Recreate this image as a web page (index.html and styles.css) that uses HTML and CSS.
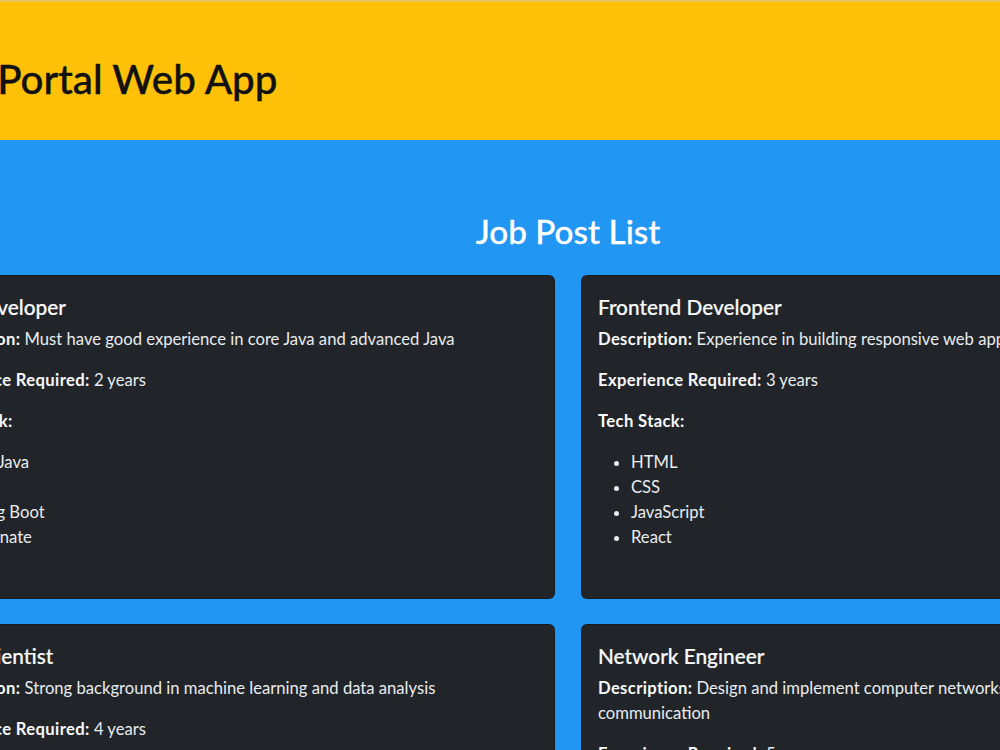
FILE: index.html
```html
<!DOCTYPE html>
<html lang="en">
<head>
<meta charset="utf-8">
<title>Job Portal Web App</title>
<link rel="stylesheet" href="styles.css">
</head>
<body>
<div class="frame">
  <div class="page">
    <header class="app-header">
      <h1 class="app-title">Job Portal Web App</h1>
    </header>
    <main class="jobs">
      <h2 class="jobs-title">Job Post List</h2>
      <div class="job-grid">
        <article class="job-card">
          <h5 class="job-name">Java Developer</h5>
          <p><strong>Description:</strong> Must have good experience in core Java and advanced Java</p>
          <p><strong>Experience Required:</strong> 2 years</p>
          <p><strong>Tech Stack:</strong></p>
          <ul class="stack">
            <li>Core Java</li>
            <li>J2EE</li>
            <li>Spring Boot</li>
            <li>Hibernate</li>
          </ul>
        </article>
        <article class="job-card">
          <h5 class="job-name">Frontend Developer</h5>
          <p><strong>Description:</strong> Experience in building responsive web applications using React</p>
          <p><strong>Experience Required:</strong> 3 years</p>
          <p><strong>Tech Stack:</strong></p>
          <ul class="stack">
            <li>HTML</li>
            <li>CSS</li>
            <li>JavaScript</li>
            <li>React</li>
          </ul>
        </article>
        <article class="job-card">
          <h5 class="job-name">Data Scientist</h5>
          <p><strong>Description:</strong> Strong background in machine learning and data analysis</p>
          <p><strong>Experience Required:</strong> 4 years</p>
          <p><strong>Tech Stack:</strong></p>
          <ul class="stack">
            <li>Python</li>
            <li>Machine Learning</li>
            <li>Data Analysis</li>
          </ul>
        </article>
        <article class="job-card">
          <h5 class="job-name">Network Engineer</h5>
          <p><strong>Description:</strong> Design and implement computer networks for efficient data communication</p>
          <p><strong>Experience Required:</strong> 5 years</p>
          <p><strong>Tech Stack:</strong></p>
          <ul class="stack">
            <li>Cisco Routing</li>
            <li>Network Security</li>
            <li>Troubleshooting</li>
          </ul>
        </article>
      </div>
    </main>
  </div>
</div>
</body>
</html>
```
FILE: styles.css
```css
html, body {
  margin: 0;
  overflow: hidden;
}

body {
  background: #2196f3;
  font-family: Lato, "Open Sans", sans-serif;
  font-size: 16.64px;
  line-height: 25px;
  color: #212529;
}

/* the page is wider than the window and stays centred on the frame */
.frame {
  width: 1136px;
  display: flex;
  justify-content: center;
}

.page {
  flex: none;
  width: 1318px;
}

.app-header {
  box-sizing: border-box;
  height: 140px;
  padding: 16px 0 0 16px;
  display: flex;
  align-items: center;
  background: #ffc107;
  border-top: 2px solid #e9c35e;
}

.app-title {
  margin: 0;
  font-size: 40.3px;
  font-weight: 500;
  line-height: 48px;
  color: #111;
  -webkit-text-stroke: 0.4px #111;
}

.jobs {
  padding: 71px 0 40px;
}

.jobs-title {
  margin: 0 0 24px;
  text-align: center;
  font-size: 33.3px;
  font-weight: 500;
  line-height: 40px;
  color: #fff;
  -webkit-text-stroke: 0.3px #fff;
}

.job-grid {
  display: grid;
  grid-template-columns: 646px 646px;
  gap: 25px 26px;
}

.job-card {
  background: #212529;
  border: 1px solid rgba(0, 0, 0, 0.18);
  border-radius: 6px;
  padding: 18px 16px 32px;
  color: #e9ecef;
}

.job-name {
  margin: 0 0 8px;
  font-size: 20.8px;
  font-weight: 500;
  line-height: 25px;
  color: #f8f9fa;
  -webkit-text-stroke: 0.2px #f8f9fa;
}

.job-card p {
  margin: 0 0 16px;
}

.job-card strong {
  font-weight: 700;
  letter-spacing: 0.35px;
  color: #f8f9fa;
}

.stack {
  margin: 0 0 16px;
  padding-left: 33px;
}
```
